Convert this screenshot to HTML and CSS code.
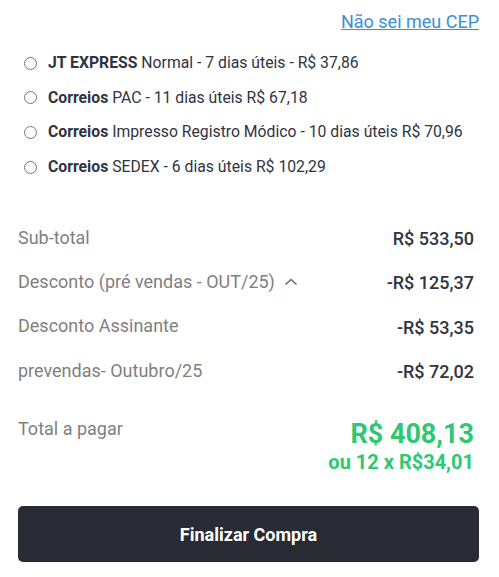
FILE: index.html
```html
<!DOCTYPE html>
<html lang="pt-BR">
<head>
  <meta charset="UTF-8" />
  <meta name="viewport" content="width=device-width, initial-scale=1.0" />
  <title>Resumo do pedido</title>
  <link rel="stylesheet" href="styles.css">
</head>
<body>
  <div class="checkout">
    <div class="cep-row">
      <a href="#" class="cep-link">Não sei meu CEP</a>
    </div>

    <div class="shipping">
      <label class="option">
        <input type="radio" name="frete" />
        <span><strong>JT EXPRESS</strong> Normal - 7 dias úteis - R$ 37,86</span>
      </label>
      <label class="option">
        <input type="radio" name="frete" />
        <span><strong>Correios</strong> PAC - 11 dias úteis R$ 67,18</span>
      </label>
      <label class="option">
        <input type="radio" name="frete" />
        <span><strong>Correios</strong> Impresso Registro Módico - 10 dias úteis R$ 70,96</span>
      </label>
      <label class="option">
        <input type="radio" name="frete" />
        <span><strong>Correios</strong> SEDEX - 6 dias úteis R$ 102,29</span>
      </label>
    </div>

    <div class="summary">
      <div class="line">
        <span class="label">Sub-total</span>
        <span class="value">R$ 533,50</span>
      </div>
      <div class="line">
        <span class="label">Desconto (pré vendas - OUT/25)
          <svg class="chevron" width="14" height="14" viewBox="0 0 14 14"><path d="M1.5 9.5 L7 4.5 L12.5 9.5" fill="none" stroke="#6b6b6b" stroke-width="1.6"/></svg>
        </span>
        <span class="value">-R$ 125,37</span>
      </div>
      <div class="line">
        <span class="label">Desconto Assinante</span>
        <span class="value">-R$ 53,35</span>
      </div>
      <div class="line">
        <span class="label">prevendas- Outubro/25</span>
        <span class="value">-R$ 72,02</span>
      </div>
    </div>

    <div class="total">
      <span class="label">Total a pagar</span>
      <div class="total-values">
        <div class="total-price">R$ 408,13</div>
        <div class="installments">ou 12 x R$34,01</div>
      </div>
    </div>

    <button class="finish">Finalizar Compra</button>
  </div>
</body>
</html>
```

FILE: styles.css
```css
body {
  font-family: Roboto, "Liberation Sans", sans-serif;
  margin: 0;
  padding: 0;
  background-color: #fff;
  color: #2f3441;
}
.checkout {
  padding: 11px 20px 0 18px;
}
.cep-row {
  display: flex;
  justify-content: flex-end;
}
.cep-link {
  font-size: 18px;
  line-height: 22px;
  color: #3a8fd6;
  text-decoration: underline;
}
.shipping {
  display: flex;
  flex-direction: column;
  gap: 14.7px;
  margin-top: 20px;
  padding-left: 6px;
}
.option {
  display: flex;
  align-items: center;
  gap: 11px;
  font-size: 15.75px;
  line-height: 20px;
  color: #2f3441;
}
.option input {
  margin: 0;
  width: 13px;
  height: 13px;
  appearance: none;
  border: 1px solid #767676;
  border-radius: 50%;
  background: #fff;
}
.option strong {
  font-weight: 700;
}
.summary {
  margin-top: 51px;
  padding-right: 5px;
  display: flex;
  flex-direction: column;
  gap: 22.4px;
}
.line {
  display: flex;
  justify-content: space-between;
  align-items: center;
  font-size: 18px;
  line-height: 22px;
}
.label {
  color: #7f7f7f;
  display: flex;
  align-items: center;
  gap: 9px;
}
.line .label {
  margin-top: -3px;
}
.value {
  font-weight: 500;
  color: #2f3441;
}
.total {
  display: flex;
  justify-content: space-between;
  align-items: flex-start;
  margin-top: 35px;
  padding-right: 5px;
  font-size: 18px;
}
.total .label {
  line-height: 22px;
}
.total-values {
  text-align: right;
  color: #2ec872;
  font-weight: 700;
}
.total-price {
  font-size: 27px;
  line-height: 32px;
}
.installments {
  font-size: 20px;
  line-height: 25px;
}
.finish {
  display: block;
  width: 100%;
  margin-top: 31px;
  height: 56px;
  border: none;
  border-radius: 5px;
  background-color: #282a34;
  color: #fff;
  font-family: inherit;
  font-size: 18px;
  font-weight: 700;
  cursor: pointer;
}
```
